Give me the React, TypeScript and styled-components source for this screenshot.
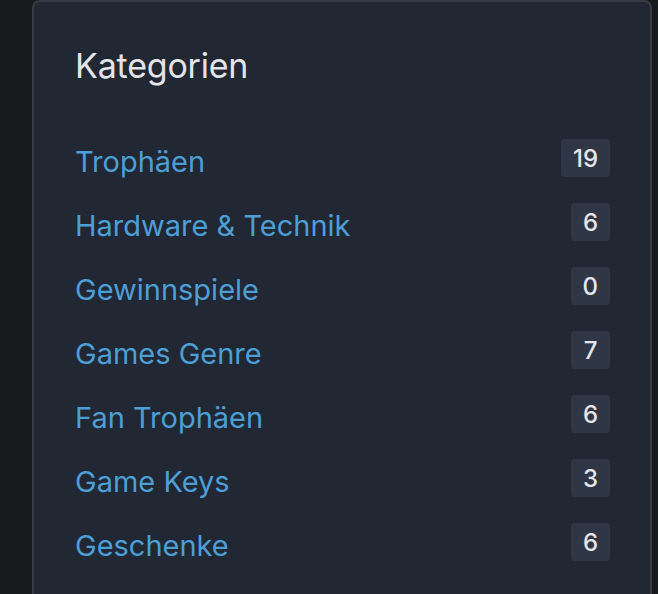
import { createGlobalStyle } from "styled-components"
import styled from "styled-components"

const GlobalStyle = createGlobalStyle`
  html, body {
    margin: 0;
    padding: 0;
    background: #18191c;
    overflow: hidden;
  }
  body {
    font-family: Inter, "Noto Sans", sans-serif;
  }
`

const Page = styled.div`
  display: flex;
  padding: 0 6px 0 32px;
  height: 594px;
`

const Card = styled.section`
  flex: 1;
  background: #212733;
  border: 2px solid #363b45;
  border-bottom: none;
  border-radius: 8px 8px 0 0;
  padding: 44px 40px 0 41px;
`

const Title = styled.h2`
  margin: 0 0 40px;
  font-size: 34px;
  font-weight: 400;
  line-height: 40px;
  color: #e2e4e8;
  letter-spacing: -0.2px;
`

const List = styled.ul`
  list-style: none;
  margin: 0;
  padding: 0;
`

const Row = styled.li`
  display: flex;
  align-items: center;
  justify-content: space-between;
  height: 64px;
`

const Link = styled.a`
  font-size: 29px;
  color: #4c9fd6;
  text-decoration: none;
  line-height: 36px;
  margin-top: 8px;
`

const Badge = styled.span`
  min-width: 39px;
  height: 38px;
  padding: 0 12px;
  box-sizing: border-box;
  display: flex;
  align-items: center;
  justify-content: center;
  background: #2f3747;
  border-radius: 4px;
  color: #e3e6ea;
  font-size: 24px;
  font-weight: 500;
`

const categories = [
  { name: "Trophäen", count: 19 },
  { name: "Hardware & Technik", count: 6 },
  { name: "Gewinnspiele", count: 0 },
  { name: "Games Genre", count: 7 },
  { name: "Fan Trophäen", count: 6 },
  { name: "Game Keys", count: 3 },
  { name: "Geschenke", count: 6 },
]

export default function App() {
  return (
    <>
      <GlobalStyle />
      <Page>
        <Card>
          <Title>Kategorien</Title>
          <List>
            {categories.map(c => (
              <Row key={c.name}>
                <Link href="#">{c.name}</Link>
                <Badge>{c.count}</Badge>
              </Row>
            ))}
          </List>
        </Card>
      </Page>
    </>
  )
}
